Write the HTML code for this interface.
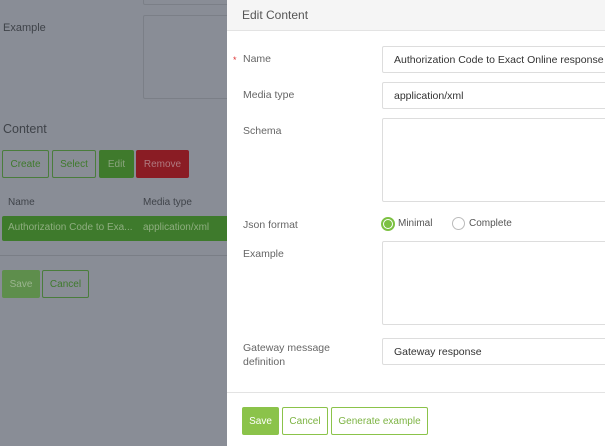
<!DOCTYPE html>
<html><head><meta charset="utf-8"><style>
*{box-sizing:border-box;margin:0;padding:0}
body{width:605px;height:446px;overflow:hidden;position:relative;background:#898d96;font-family:"Liberation Sans",sans-serif;font-size:11px;color:#3a3d42}
.a{position:absolute}
.dk{color:#3f4349}
.ib{border:1px solid #7b7f87;border-radius:2px}
.bo{border:1px solid #4a7d3c;color:#3f7a2c;font-size:10px;display:flex;align-items:center;justify-content:center;border-radius:2px}
.panel{left:227px;top:0;width:378px;height:446px;background:#fff}
.lab{color:#666;font-size:10.5px;position:absolute;left:16px}
.inp{position:absolute;left:155px;width:240px;border:1px solid #ddd;border-radius:2px;background:#fff;color:#333;font-size:10.5px;padding-left:11px;display:flex;align-items:center;white-space:nowrap;overflow:hidden}
.gb{position:absolute;top:407px;height:28px;border:1px solid #8bc34a;color:#7cb342;font-size:10px;display:flex;align-items:center;justify-content:center;border-radius:2px;background:#fff}
</style></head><body>
<div class="a ib" style="left:143px;top:-4px;width:90px;height:9px"></div>
<div class="a dk" style="left:3px;top:22px">Example</div>
<div class="a ib" style="left:143px;top:15px;width:90px;height:84px"></div>
<div class="a dk" style="left:3px;top:122px;font-size:12.5px">Content</div>
<div class="a bo" style="left:2px;top:150px;width:47px;height:28px">Create</div>
<div class="a bo" style="left:52px;top:150px;width:44px;height:28px">Select</div>
<div class="a bo" style="left:99px;top:150px;width:35px;height:28px;background:#3f7a2c;border-color:#3f7a2c;color:#8aa47e">Edit</div>
<div class="a bo" style="left:136px;top:150px;width:53px;height:28px;background:#8a1c24;border-color:#8a1c24;color:#b07a80">Remove</div>
<div class="a dk" style="left:8px;top:197px;font-size:10px">Name</div>
<div class="a dk" style="left:143px;top:197px;font-size:10px">Media type</div>
<div class="a" style="left:2px;top:216px;width:230px;height:25px;background:#3e7a2c;border-radius:2px 0 0 2px"></div>
<div class="a" style="left:8px;top:222px;color:#8fae80;font-size:10px">Authorization Code to Exa...</div>
<div class="a" style="left:143px;top:222px;color:#8fae80;font-size:10px">application/xml</div>
<div class="a" style="left:0;top:255px;width:227px;height:1px;background:#7a7e86"></div>
<div class="a bo" style="left:2px;top:270px;width:38px;height:28px;background:#5e8e4c;border-color:#5e8e4c;color:#9bb58f">Save</div>
<div class="a bo" style="left:42px;top:270px;width:47px;height:28px">Cancel</div>

<div class="a panel">
<div class="a" style="left:0;top:0;width:378px;height:31px;background:#f5f5f5;border-bottom:1px solid #e3e3e3"></div>
<div class="a" style="left:15px;top:8px;font-size:12px;color:#555">Edit Content</div>
<div class="a" style="left:6px;top:55px;color:#d33;font-size:9px">*</div>
<div class="lab" style="top:53px">Name</div>
<div class="inp" style="top:46px;height:27px">Authorization Code to Exact Online response</div>
<div class="lab" style="top:89px">Media type</div>
<div class="inp" style="top:82px;height:27px">application/xml</div>
<div class="lab" style="top:125px">Schema</div>
<div class="inp" style="top:118px;height:84px"></div>
<div class="lab" style="top:219px">Json format</div>
<div class="a" style="left:154px;top:217px;width:14px;height:14px;border-radius:50%;border:2px solid #7cc142;background:#fff;padding:1px"><div style="width:8px;height:8px;border-radius:50%;background:#7cc142"></div></div>
<div class="a" style="left:171px;top:218px;font-size:10px;color:#555">Minimal</div>
<div class="a" style="left:225px;top:217px;width:13px;height:13px;border-radius:50%;border:1px solid #bbb"></div>
<div class="a" style="left:242px;top:218px;font-size:10px;color:#555">Complete</div>
<div class="lab" style="top:248px">Example</div>
<div class="inp" style="top:241px;height:84px"></div>
<div class="lab" style="top:341px;line-height:14px">Gateway message<br>definition</div>
<div class="inp" style="top:338px;height:27px">Gateway response</div>
<div class="a" style="left:0;top:392px;width:378px;height:1px;background:#e3e3e3"></div>
<div class="gb" style="left:15px;width:37px;background:#8bc34a;color:#fff">Save</div>
<div class="gb" style="left:55px;width:46px">Cancel</div>
<div class="gb" style="left:104px;width:97px">Generate example</div>
</div>
</body></html>
